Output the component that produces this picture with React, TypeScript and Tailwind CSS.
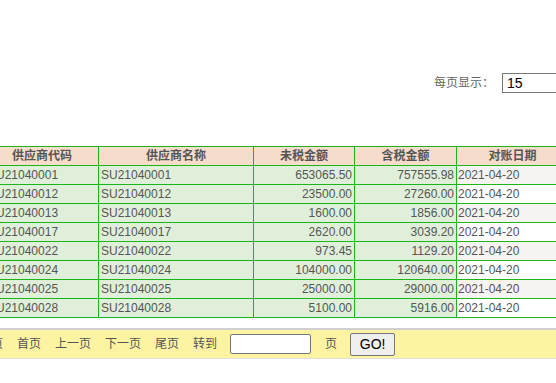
import React from "react";

type Row = {
  code: string;
  name: string;
  net: string;
  gross: string;
  date: string;
};

const rows: Row[] = [
  { code: "SU21040001", name: "SU21040001", net: "653065.50", gross: "757555.98", date: "2021-04-20" },
  { code: "SU21040012", name: "SU21040012", net: "23500.00", gross: "27260.00", date: "2021-04-20" },
  { code: "SU21040013", name: "SU21040013", net: "1600.00", gross: "1856.00", date: "2021-04-20" },
  { code: "SU21040017", name: "SU21040017", net: "2620.00", gross: "3039.20", date: "2021-04-20" },
  { code: "SU21040022", name: "SU21040022", net: "973.45", gross: "1129.20", date: "2021-04-20" },
  { code: "SU21040024", name: "SU21040024", net: "104000.00", gross: "120640.00", date: "2021-04-20" },
  { code: "SU21040025", name: "SU21040025", net: "25000.00", gross: "29000.00", date: "2021-04-20" },
  { code: "SU21040028", name: "SU21040028", net: "5100.00", gross: "5916.00", date: "2021-04-20" },
];

const font = "font-['Liberation_Sans','Noto_Sans_CJK_SC',sans-serif]";
const th = "h-[19px] p-0 border border-[#1cb51c] bg-[#f5dccb] text-center font-bold text-[#555] leading-[17px]";
const td = "h-[19px] p-0 px-[2px] border border-[#1cb51c] bg-[#e0efd9] leading-[17px]";

const App = () => {
  return (
    <div className={`w-[556px] h-[383px] overflow-hidden bg-white text-[12px] text-[#555] ${font}`}>
      <div className="pt-[73px] flex justify-end items-center -mr-[40px]">
        <span className="text-[12px] text-[#666]">每页显示：</span>
        <input
          defaultValue="15"
          className="ml-[8px] w-[94px] h-[20px] border border-[#767676] px-[4px] text-[14px] text-black font-['Liberation_Sans',sans-serif] outline-none"
        />
      </div>

      <table className="mt-[53px] -ml-[15px] border-collapse table-fixed w-[583px]">
        <colgroup>
          <col className="w-[113px]" />
          <col className="w-[155px]" />
          <col className="w-[101px]" />
          <col className="w-[102px]" />
          <col className="w-[112px]" />
        </colgroup>
        <thead>
          <tr>
            <th className={th}>供应商代码</th>
            <th className={th}>供应商名称</th>
            <th className={th}>未税金额</th>
            <th className={th}>含税金额</th>
            <th className={th}>对账日期</th>
          </tr>
        </thead>
        <tbody>
          {rows.map((r, i) => (
            <tr key={r.code}>
              <td className={`${td} text-left`}>{r.code}</td>
              <td className={`${td} text-left`}>{r.name}</td>
              <td className={`${td} text-right`}>{r.net}</td>
              <td className={`${td} text-right`}>{r.gross}</td>
              <td
                className={`h-[19px] p-0 px-[1px] border border-[#1cb51c] text-left leading-[17px] ${
                  i % 2 === 0 ? "bg-[#f5f4f0]" : "bg-white"
                }`}
              >
                {r.date}
              </td>
            </tr>
          ))}
        </tbody>
      </table>

      <div className="mt-[10px] h-[31px] border-t-2 border-t-[#d0d0d0] border-b border-b-[#e0e0e0] bg-[#fdf4a3] flex items-center text-[12px] text-[#555]">
        <span className="-ml-[9px]">页</span>
        <span className="ml-[14px] cursor-pointer">首页</span>
        <span className="ml-[14px] cursor-pointer">上一页</span>
        <span className="ml-[14px] cursor-pointer">下一页</span>
        <span className="ml-[14px] cursor-pointer">尾页</span>
        <span className="ml-[14px]">转到</span>
        <input className="ml-[13px] w-[81px] h-[20px] bg-white border border-[#767676] rounded-[2px] outline-none" />
        <span className="ml-[14px]">页</span>
        <button className="ml-[13px] w-[45px] h-[23px] bg-[#efefef] border border-[#767676] rounded-[2px] text-[14px] text-black font-['Liberation_Sans',sans-serif]">
          GO!
        </button>
      </div>
    </div>
  );
};

export default App;
